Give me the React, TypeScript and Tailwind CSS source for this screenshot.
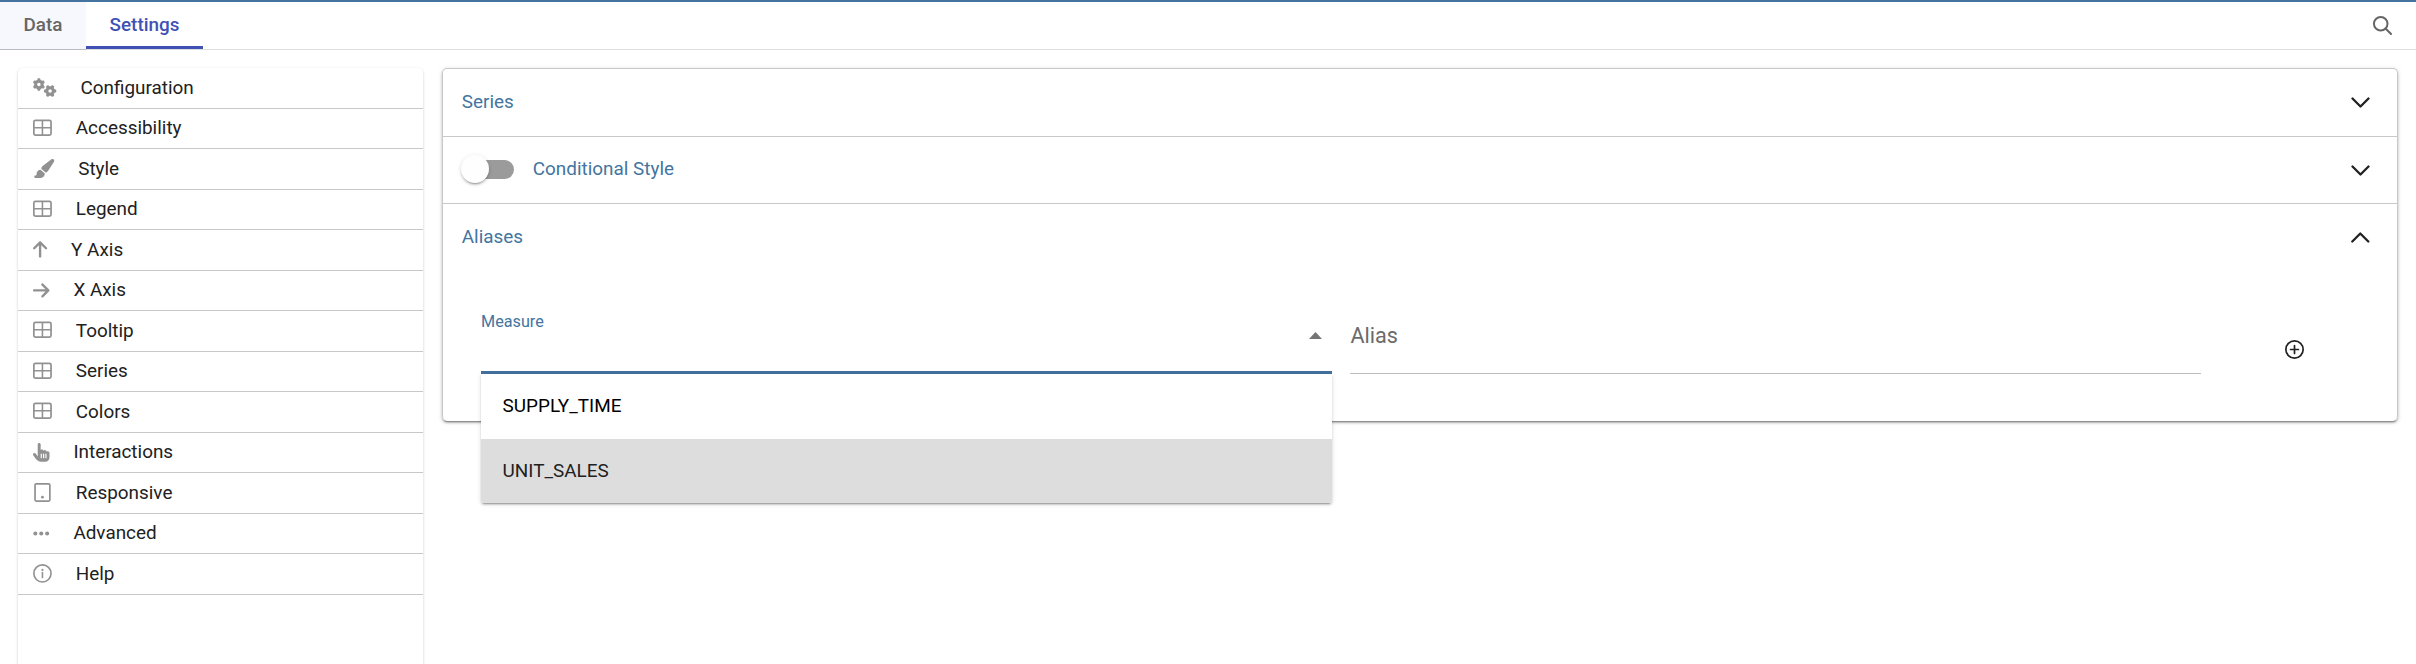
import React from 'react';
import {
  FaArrowRight,
  FaArrowUp,
  FaEllipsis,
  FaGears,
  FaHandPointer,
  FaPaintbrush,
} from 'react-icons/fa6';

const solid = 'block h-[18.9px] w-full overflow-visible';

function GridIcon() {
  return (
    <svg viewBox="0 0 512 512" className={solid} fill="none" stroke="currentColor" strokeWidth="46">
      <rect x="23" y="35" width="466" height="402" rx="44" />
      <path d="M256 35v402M23 236h466" strokeWidth="42" />
    </svg>
  );
}

function TabletIcon() {
  return (
    <svg viewBox="0 0 512 512" className={solid} fill="none" stroke="currentColor" strokeWidth="46">
      <rect x="55" y="23" width="402" height="466" rx="34" />
      <circle cx="256" cy="384" r="38" fill="currentColor" stroke="none" />
    </svg>
  );
}

function InfoIcon() {
  return (
    <svg viewBox="0 0 512 512" className={solid} fill="none" stroke="currentColor" strokeWidth="44">
      <circle cx="256" cy="256" r="233" />
      <circle cx="256" cy="160" r="30" fill="currentColor" stroke="none" />
      <path d="M256 216v168" strokeWidth="42" />
    </svg>
  );
}

function PlusCircleIcon() {
  return (
    <svg viewBox="0 0 512 512" className="block size-[19px] overflow-visible" fill="none" stroke="currentColor" strokeWidth="46" strokeLinecap="round">
      <circle cx="256" cy="256" r="233" />
      <path d="M256 150v212M150 256h212" />
    </svg>
  );
}

function SearchIcon() {
  return (
    <svg viewBox="0 0 512 512" className="block size-[19px] overflow-visible" fill="none" stroke="currentColor" strokeWidth="54" strokeLinecap="round">
      <circle cx="208" cy="208" r="183" />
      <path d="M338 338l148 148" />
    </svg>
  );
}

function Chevron({ up = false }: { up?: boolean }) {
  return (
    <svg viewBox="0 0 19 11" className="block h-[11px] w-[19px]" fill="none" stroke="currentColor" strokeWidth="2.3" strokeLinecap="round" strokeLinejoin="round">
      <path d={up ? 'M1.3 9.5L9.3 1.5l8 8' : 'M1.5 1.5l8 8 8-8'} />
    </svg>
  );
}

const menu = [
  { label: 'Configuration', icon: <FaGears className={solid} />, width: 'w-[23.6px]' },
  { label: 'Accessibility', icon: <GridIcon />, width: 'w-[18.9px]' },
  { label: 'Style', icon: <FaPaintbrush className={solid} />, width: 'w-[21.3px]' },
  { label: 'Legend', icon: <GridIcon />, width: 'w-[18.9px]' },
  { label: 'Y Axis', icon: <FaArrowUp className={solid} />, width: 'w-[14.2px]' },
  { label: 'X Axis', icon: <FaArrowRight className={solid} />, width: 'w-[16.5px]' },
  { label: 'Tooltip', icon: <GridIcon />, width: 'w-[18.9px]' },
  { label: 'Series', icon: <GridIcon />, width: 'w-[18.9px]' },
  { label: 'Colors', icon: <GridIcon />, width: 'w-[18.9px]' },
  { label: 'Interactions', icon: <FaHandPointer className={solid} />, width: 'w-[16.5px]' },
  { label: 'Responsive', icon: <TabletIcon />, width: 'w-[18.9px]' },
  { label: 'Advanced', icon: <FaEllipsis className={solid} />, width: 'w-[16.5px]' },
  { label: 'Help', icon: <InfoIcon />, width: 'w-[18.9px]' },
];

function Header() {
  return (
    <header className="flex h-[50px] border-t-2 border-[#4473a0]">
      <button className="flex w-[86px] items-center justify-center border-b border-[#b9bac4] bg-[#f6f8fd] pb-[2px] font-medium text-[#666666]">
        Data
      </button>
      <button className="w-[117px] border-b border-[#dedede] font-medium text-[#3f51b5]">
        <span className="flex h-[47px] items-center justify-center border-b-3 border-[#3f51b5] pt-px">
          Settings
        </span>
      </button>
      <div className="flex flex-1 items-start justify-end border-b border-[#dedede] pt-3.5 pr-6 text-[#666666]">
        <SearchIcon />
      </div>
    </header>
  );
}

function Sidebar() {
  return (
    <nav className="h-[640px] w-[405px] shrink-0 rounded-[5px] shadow-[0_1px_3px_rgba(0,0,0,0.2)]">
      {menu.map((item) => (
        <div key={item.label} className="flex h-[40.5px] items-center border-b border-[#c8c8c8] pl-[14.6px] text-[#212121]">
          <span className={`mr-[24.3px] text-[#919191] ${item.width}`}>{item.icon}</span>
          {item.label}
        </div>
      ))}
    </nav>
  );
}

function Toggle() {
  return (
    <span className="mr-[19px] mb-[2px] flex h-[28px] w-[52px] items-center justify-end">
      <span className="flex h-[19px] w-[48.6px] items-center rounded-full bg-[#9b9b9b]">
        <span className="-ml-[4px] size-[28px] shrink-0 rounded-full bg-[#fefefe] shadow-[0_3px_1px_-2px_rgba(0,0,0,0.2),0_2px_2px_rgba(0,0,0,0.14),0_1px_5px_rgba(0,0,0,0.12)]" />
      </span>
    </span>
  );
}

function MeasureSelect() {
  return (
    <div className="relative h-[73px] w-[851px] border-b-3 border-[#43719f]">
      <div className="pt-[11px] text-[16.2px] leading-[20px] text-[#43759f]">Measure</div>
      <svg viewBox="0 0 13 7" className="absolute top-[31px] right-[10px] h-[7px] w-[13px] text-[#757575]">
        <path d="M0 7L6.5 0 13 7z" fill="currentColor" />
      </svg>
      <ul className="absolute top-[73px] left-0 w-[851px] rounded-b-[3px] bg-white shadow-[0_3px_1px_-2px_rgba(0,0,0,0.2),0_2px_2px_rgba(0,0,0,0.14),0_1px_5px_rgba(0,0,0,0.12)]">
        <li className="flex h-[65px] items-center pb-[2px] pl-[21.6px] text-black">SUPPLY_TIME</li>
        <li className="flex h-[64px] items-center rounded-b-[3px] bg-[#dddddd] pl-[21.6px] text-[#212121]">UNIT_SALES</li>
      </ul>
    </div>
  );
}

function Panels() {
  return (
    <section className="h-[353px] w-[1956px] rounded-[5px] border border-b-0 border-[#c8c8c8] text-[#43759f] shadow-[0_3px_1px_-2px_rgba(0,0,0,0.26),0_2px_2px_rgba(0,0,0,0.22),0_1px_5px_rgba(0,0,0,0.14)]">
      <div className="flex h-[68px] items-center justify-between border-b border-[#c8c8c8] pr-[27px] pl-[18.8px]">
        <span className="pb-[2px]">Series</span>
        <span className="text-[#212121]"><Chevron /></span>
      </div>
      <div className="flex h-[67px] items-center border-b border-[#c8c8c8] pr-[27px] pl-[18.8px]">
        <Toggle />
        <span className="pb-[2px]">Conditional Style</span>
        <span className="ml-auto text-[#212121]"><Chevron /></span>
      </div>
      <div className="flex h-[67px] items-center justify-between pr-[27px] pl-[18.8px]">
        <span className="pb-[2px]">Aliases</span>
        <span className="text-[#212121]"><Chevron up /></span>
      </div>
      <div className="mt-[30px] flex pl-[38px]">
        <MeasureSelect />
        <div className="ml-[18px] h-[73px] w-[851px] border-b border-[#bdbdbd] pt-[22px] pl-[0.5px] text-[21.6px] leading-[26px] text-[#6b6b6b]">
          Alias
        </div>
        <div className="mt-[39px] ml-[84px] text-[#212121]">
          <PlusCircleIcon />
        </div>
      </div>
    </section>
  );
}

export default function App() {
  return (
    <div className="h-[664px] w-full overflow-hidden bg-white font-[Roboto,sans-serif] text-[18.9px] leading-[22px]">
      <Header />
      <main className="flex gap-[19px] pt-[18px] pl-[18px]">
        <Sidebar />
        <Panels />
      </main>
    </div>
  );
}
